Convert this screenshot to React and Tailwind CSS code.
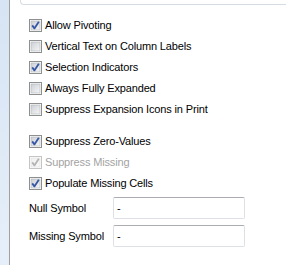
import React from 'react';

function Check({ checked, disabled }) {
  const border = disabled ? '#c5c5c5' : '#8e8f8f';
  const mark = disabled ? '#b4b4b4' : '#3557a4';
  return (
    <svg width="13" height="13" viewBox="0 0 13 13" className="shrink-0">
      <defs>
        <linearGradient id={disabled ? 'cbd' : 'cbn'} x1="0" y1="0" x2="1" y2="1">
          <stop offset="0" stopColor={disabled ? '#f0f0f0' : '#cbcfd5'} />
          <stop offset="1" stopColor={disabled ? '#fafafa' : '#f6f6f6'} />
        </linearGradient>
      </defs>
      <rect x="0.5" y="0.5" width="12" height="12" fill="#fff" stroke={border} />
      <rect x="2" y="2" width="9" height="9" fill={`url(#${disabled ? 'cbd' : 'cbn'})`} stroke={disabled ? '#dcdcdc' : '#b0b4ba'} strokeWidth="0.6" />
      {checked && (
        <path d="M3.2 6.4 L5.4 9.4 L9.8 2.8" fill="none" stroke={mark} strokeWidth="1.8" strokeLinejoin="round" />
      )}
    </svg>
  );
}

function Row({ label, checked, disabled }) {
  return (
    <div className="h-[21px] flex items-center gap-[3px]">
      <Check checked={checked} disabled={disabled} />
      <span className={disabled ? 'text-[#a3a3a3]' : 'text-black'}>{label}</span>
    </div>
  );
}

function Field({ label }) {
  return (
    <div className="h-[22px] flex items-center">
      <span className="w-[84px]">{label}</span>
      <div className="w-[132px] h-[22px] border border-[#dde1e7] border-t-[#abadb3] rounded-[2px] flex items-center pl-[3px] bg-white">
        -
      </div>
    </div>
  );
}

export default function App() {
  return (
    <div className="w-[286px] h-[265px] flex bg-white overflow-hidden font-['Liberation_Sans',Arial,sans-serif] text-[11px] tracking-[-0.15px] text-black">
      <div className="w-[9px] bg-gradient-to-b from-[#d6e4f3] to-[#e6eff9]" />
      <div className="w-px bg-[#a0a0a0]" />
      <div className="flex-1 flex flex-col">
        <div className="ml-[10px] h-[5px] border-l border-b border-[#d5dce3] rounded-bl-[4px]" />
        <div className="pl-[19px] pt-[10px] flex flex-col">
          <Row label="Allow Pivoting" checked />
          <Row label="Vertical Text on Column Labels" />
          <Row label="Selection Indicators" checked />
          <Row label="Always Fully Expanded" />
          <Row label="Suppress Expansion Icons in Print" />
          <div className="h-[11px]" />
          <Row label="Suppress Zero-Values" checked />
          <Row label="Suppress Missing" checked disabled />
          <Row label="Populate Missing Cells" checked />
          <div className="mt-[3px] flex flex-col gap-[6px]">
            <Field label="Null Symbol" />
            <Field label="Missing Symbol" />
          </div>
        </div>
      </div>
    </div>
  );
}
